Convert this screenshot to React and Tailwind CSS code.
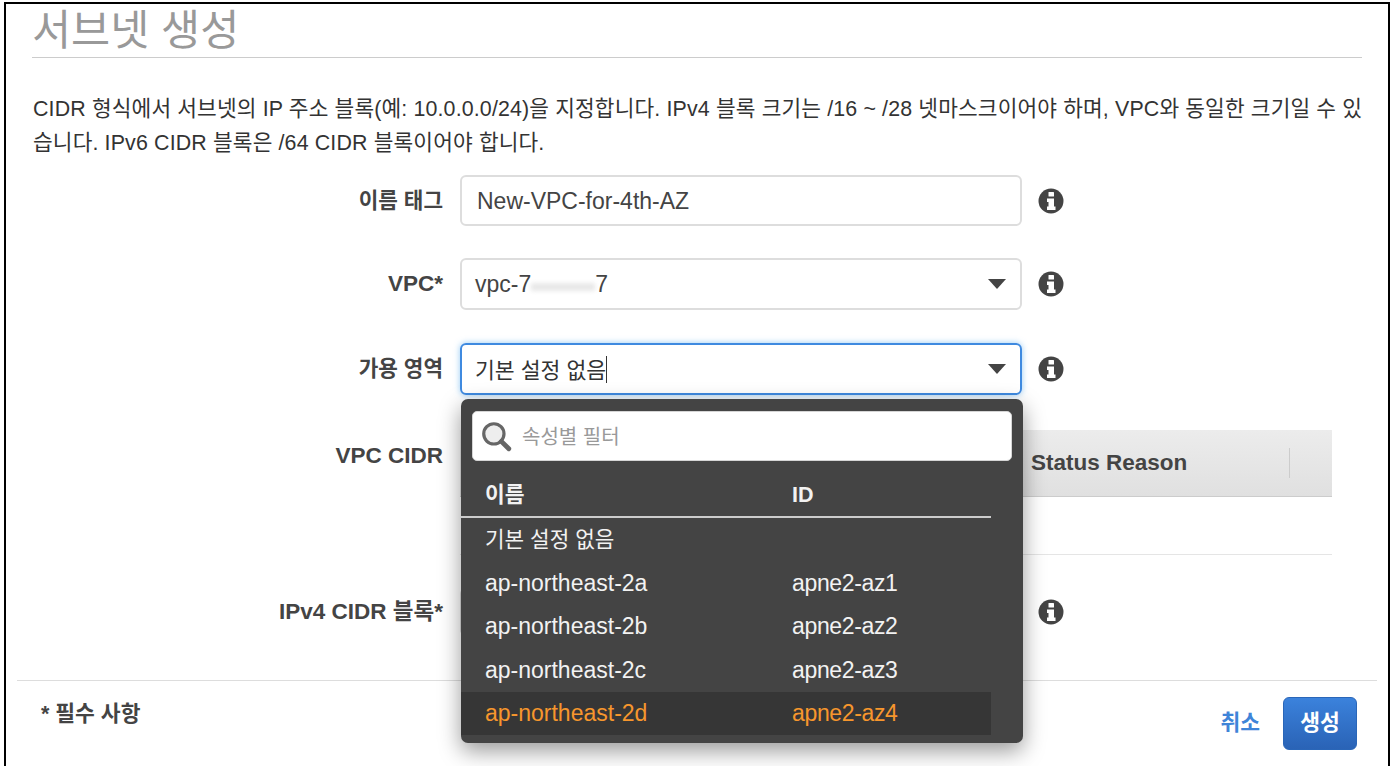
import React from 'react';

const FONT = '[font-family:"Liberation_Sans","Noto_Sans_CJK_KR",sans-serif]';

const zones = [
  { name: 'ap-northeast-2a', id: 'apne2-az1' },
  { name: 'ap-northeast-2b', id: 'apne2-az2' },
  { name: 'ap-northeast-2c', id: 'apne2-az3' },
  { name: 'ap-northeast-2d', id: 'apne2-az4', active: true },
];

const Caret = () => (
  <svg width="18" height="10" viewBox="0 0 18 10" className="absolute right-[14px] top-1/2 -translate-y-1/2">
    <path d="M0 0H18L9 10Z" fill="#444" />
  </svg>
);

const Info = () => (
  <svg width="26" height="26" viewBox="0 0 26 26" className="shrink-0">
    <circle cx="13" cy="13" r="12.5" fill="#444" />
    <rect x="10.5" y="4" width="5.5" height="4.5" rx="0.5" fill="#fff" />
    <path d="M9 10.5H16V18.5H17.5V22H9V18.5H10.5V14H9Z" fill="#fff" />
  </svg>
);

// hangul sits a pixel high in the noto face, hence the per-label class
const Row = ({ label, labelClass = 'text-[22.5px]', className = '', children }) => (
  <div className={`flex items-center ${className}`}>
    <label className={`w-[454px] pr-[17px] text-right font-bold text-[#444] shrink-0 ${labelClass}`}>{label}</label>
    {children}
  </div>
);

const AzDropdown = () => (
  <div className="absolute left-[455px] top-[395px] w-[562px] h-[344px] z-10 bg-[#444] rounded-[7px] shadow-[0_8px_22px_rgba(0,0,0,0.4)] pt-[12px]">
    <div className="mx-[11px] h-[50px] bg-white rounded-[5px] border border-[#d5d5d5] flex items-center pl-[7px]">
      <svg width="32" height="32" viewBox="0 0 30 30">
        <circle cx="13" cy="13" r="9.5" fill="#eee" stroke="#666" strokeWidth="3" />
        <path d="M20 20L27 27" stroke="#666" strokeWidth="4.5" strokeLinecap="round" />
      </svg>
      <span className="ml-[10px] pt-[2px] text-[20px] text-[#999]">속성별 필터</span>
    </div>
    <div className="w-[530px] mt-[11px] text-[#f2f2f2] text-[23px]">
      <div className="flex items-center h-[46px] pl-[24px] pt-[3px] border-b-2 border-[#ccc] font-bold text-[21.5px]">
        <span className="w-[307px]">이름</span>
        <span>ID</span>
      </div>
      <div className="flex items-center h-[43px] pl-[24px] pt-[2px] text-[21.3px]">기본 설정 없음</div>
      {zones.map((z) => (
        <div
          key={z.id}
          className={`flex items-center h-[43.5px] pl-[24px] ${z.active ? 'bg-[#363636] text-[#f7962d]' : ''}`}
        >
          <span className="w-[307px]">{z.name}</span>
          <span className="tracking-[-0.35px]">{z.id}</span>
        </div>
      ))}
    </div>
  </div>
);

export default function App() {
  return (
    <div className={`w-[1396px] h-[766px] bg-white overflow-hidden pl-[4px] pr-[6px] pt-[2px] text-[#444] ${FONT}`}>
      <div className="relative h-[780px] border-l-2 border-r-2 border-t-2 border-black">
        <AzDropdown />

        <div className="mx-[26px] h-[54px] border-b border-[#ccc] text-[42.5px] leading-[54px] text-[#999]">서브넷 생성</div>

        <p className="mx-[27px] mt-[35px] text-[21.4px] leading-[33.5px] text-[#333] tracking-[0.14px] whitespace-nowrap">
          CIDR 형식에서 서브넷의 IP 주소 블록(예: 10.0.0.0/24)을 지정합니다. IPv4 블록 크기는 /16 ~ /28 넷마스크이어야 하며, VPC와 동일한 크기일 수 있
          <br />
          습니다. IPv6 CIDR 블록은 /64 CIDR 블록이어야 합니다.
        </p>

        <div className="mt-[15px]">
          <Row label="이름 태그" labelClass="text-[21.3px] pt-[2px]" className="h-[51px]">
            <div className="w-[562px] h-[51px] border-2 border-[#ddd] rounded-[6px] flex items-center pl-[15px] pt-[2px] text-[23px] text-[#444]">New-VPC-for-4th-AZ</div>
            <span className="ml-[16px]"><Info /></span>
          </Row>

          <Row label="VPC*" className="h-[52px] mt-[32px]">
            <div className="relative w-[562px] h-[52px] border-2 border-[#ddd] rounded-[6px] flex items-center pl-[13px] text-[23px] text-[#444]">
              vpc-7<span className="w-[64px] h-[8px] mt-[6px] bg-[#e8e8e8] blur-[2px]" />7
              <Caret />
            </div>
            <span className="ml-[16px]"><Info /></span>
          </Row>

          <Row label="가용 영역" labelClass="text-[21.3px] pt-[2px]" className="h-[52px] mt-[33px]">
            <div className="relative w-[562px] h-[52px] border-2 border-[#3f8ae0] rounded-[6px] shadow-[0_0_6px_rgba(82,168,236,0.6)] flex items-center pl-[13px] text-[21.6px] text-[#333]">
              <span className="pt-[4px]">기본 설정 없음</span>
              <span className="w-px h-[27px] bg-[#333]" />
              <Caret />
            </div>
            <span className="ml-[16px]"><Info /></span>
          </Row>

          <div className="flex mt-[35px]">
            <label className="w-[454px] pr-[17px] pt-[9px] text-right font-bold text-[22.5px] text-[#444] shrink-0">VPC CIDR</label>
            <div className="w-[872px]">
              <div className="h-[67px] border-b border-[#ccc] bg-gradient-to-b from-[#ececec] to-[#e0e0e0] flex items-center pl-[571px]">
                <span className="w-[258px] font-bold text-[22.5px] text-[#444]">Status Reason</span>
                <span className="w-px h-[30px] bg-[#ccc]" />
              </div>
              <div className="h-[58px] border-b border-[#e5e5e5]" />
            </div>
          </div>

          <Row label="IPv4 CIDR 블록*" className="h-[48px] mt-[33px]">
            <div className="w-[562px] h-[48px] border-2 border-[#ddd] rounded-[6px]" />
            <span className="ml-[16px]"><Info /></span>
          </Row>
        </div>

        <div className="mx-[11px] mt-[44px] border-t border-[#ddd] flex items-center justify-between pl-[24px] pr-[20px] pt-[16px]">
          <span className="font-bold text-[21.5px] text-[#444] -mt-[18px]">* 필수 사항</span>
          <div className="flex items-center gap-[23px]">
            <span className="font-bold text-[21.5px] text-[#3f84d8]">취소</span>
            <button className="w-[74px] h-[53px] rounded-[6px] border border-[#2a66b8] bg-gradient-to-b from-[#3b82dc] to-[#2a63b6] text-white font-bold text-[21.5px]">생성</button>
          </div>
        </div>
      </div>
    </div>
  );
}
